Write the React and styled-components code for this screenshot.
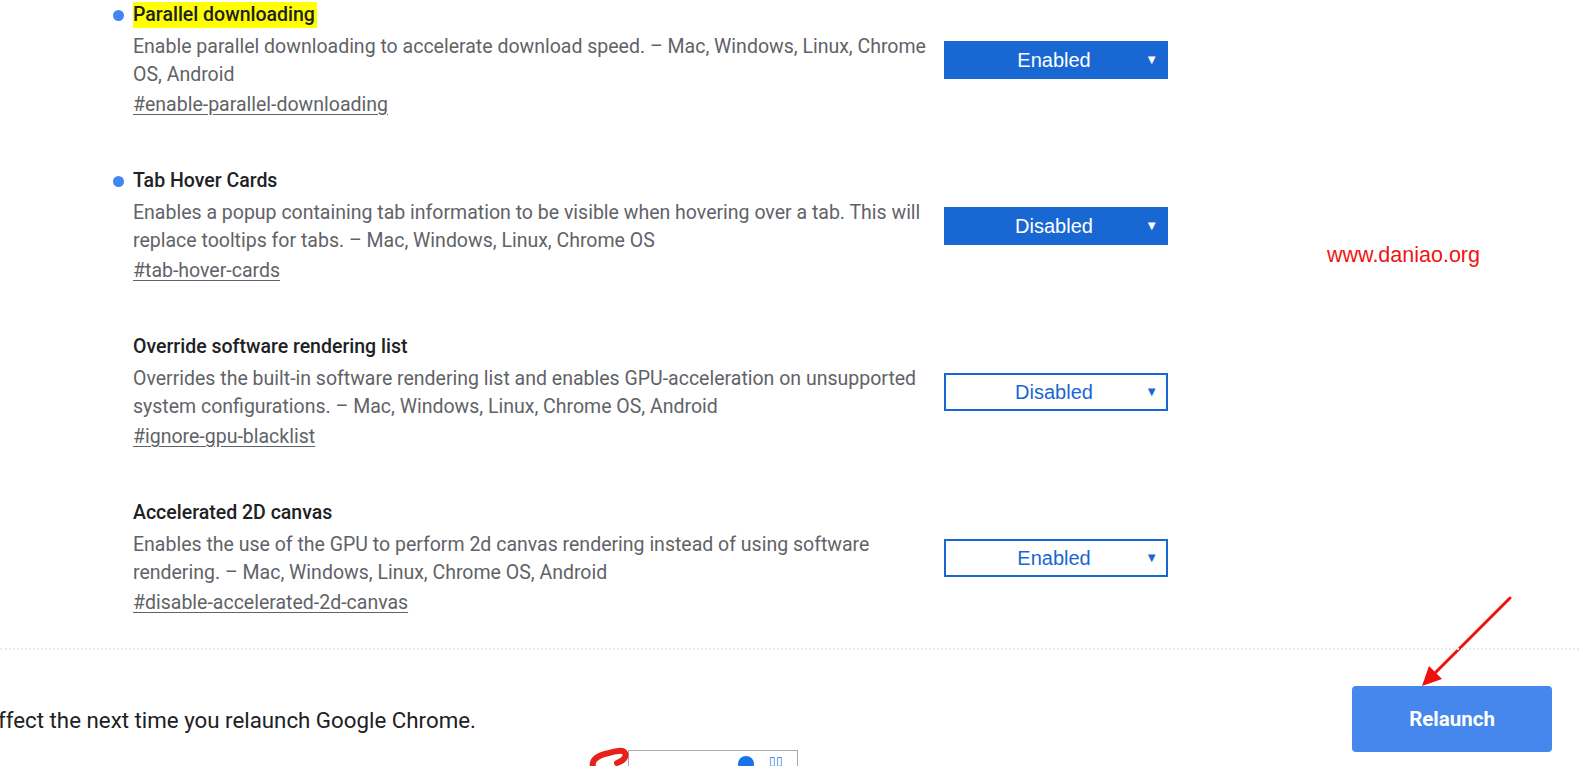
import React from 'react';
import styled, { createGlobalStyle } from 'styled-components';

const GlobalStyle = createGlobalStyle`
  html, body {
    margin: 0;
    padding: 0;
    background: #fff;
    font-family: Roboto, "Liberation Sans", Arial, sans-serif;
  }
  body {
    width: 1579px;
    height: 766px;
    overflow: hidden;
  }
`;

const experiments = [
  {
    title: 'Parallel downloading',
    highlight: true,
    modified: true,
    desc: 'Enable parallel downloading to accelerate download speed. – Mac, Windows, Linux, Chrome OS, Android',
    link: '#enable-parallel-downloading',
    value: 'Enabled',
    filled: true,
  },
  {
    title: 'Tab Hover Cards',
    modified: true,
    desc: 'Enables a popup containing tab information to be visible when hovering over a tab. This will replace tooltips for tabs. – Mac, Windows, Linux, Chrome OS',
    link: '#tab-hover-cards',
    value: 'Disabled',
    filled: true,
  },
  {
    title: 'Override software rendering list',
    desc: 'Overrides the built-in software rendering list and enables GPU-acceleration on unsupported system configurations. – Mac, Windows, Linux, Chrome OS, Android',
    link: '#ignore-gpu-blacklist',
    value: 'Disabled',
  },
  {
    title: 'Accelerated 2D canvas',
    desc: 'Enables the use of the GPU to perform 2d canvas rendering instead of using software rendering. – Mac, Windows, Linux, Chrome OS, Android',
    link: '#disable-accelerated-2d-canvas',
    value: 'Enabled',
  },
];

const App = () => {
  return (
    <Page>
      <GlobalStyle />
      <List>
        {experiments.map((e) => (
          <Experiment key={e.link}>
            <Info>
              <Title $modified={e.modified}>
                <TitleText $highlight={e.highlight}>{e.title}</TitleText>
              </Title>
              <Desc>{e.desc}</Desc>
              <Permalink>{e.link}</Permalink>
            </Info>
            <Select $filled={e.filled}>
              <span>{e.value}</span>
              <Caret>▼</Caret>
            </Select>
          </Experiment>
        ))}
      </List>

      <Watermark>www.daniao.org</Watermark>

      <Arrow width="120" height="110" viewBox="0 0 120 110">
        <line x1="108" y1="8" x2="28" y2="88" stroke="#f01010" strokeWidth="3" strokeLinecap="round" />
        <polygon points="20,96 27,76 40,89" fill="#f01010" />
      </Arrow>

      <Footer>
        <Notice>ffect the next time you relaunch Google Chrome.</Notice>
        <RelaunchButton>Relaunch</RelaunchButton>
        <Snippet>
          <Scribble width="44" height="22" viewBox="0 0 44 22">
            <path d="M6 20 C4 12 12 8 22 6 C30 4 36 2 38 6 C40 10 36 14 30 16" stroke="#e8201a" strokeWidth="6" fill="none" strokeLinecap="round" />
          </Scribble>
          <SnippetDot />
          <SnippetGlyph>▯▯</SnippetGlyph>
        </Snippet>
      </Footer>
    </Page>
  );
};

const Page = styled.div`
  position: relative;
  width: 1579px;
  height: 766px;
  overflow: hidden;
`;

const List = styled.div`
  display: flex;
  flex-direction: column;
  gap: 49px;
  padding: 2px 0 0 133px;
  height: 648px;
  box-sizing: border-box;
`;

const Experiment = styled.div`
  display: flex;
  align-items: flex-start;
`;

const Info = styled.div`
  width: 795px;
  margin-right: 16px;
`;

const Title = styled.div`
  position: relative;
  height: 26px;
  line-height: 26px;
  margin-bottom: 5px;
  &::before {
    content: '';
    display: ${(p) => (p.$modified ? 'block' : 'none')};
    position: absolute;
    left: -20px;
    top: 8px;
    width: 11px;
    height: 11px;
    border-radius: 50%;
    background: #4285f4;
  }
`;

const TitleText = styled.span`
  display: inline-block;
  font-size: 19.5px;
  font-weight: 500;
  color: #202124;
  background: ${(p) => (p.$highlight ? '#ffff00' : 'transparent')};
  padding-right: ${(p) => (p.$highlight ? '2px' : '0')};
`;

const Desc = styled.div`
  font-size: 19.5px;
  line-height: 28px;
  color: #5f6368;
`;

const Permalink = styled.div`
  margin-top: 2px;
  font-size: 19.5px;
  line-height: 28px;
  color: #5f6368;
  text-decoration: underline;
  text-underline-offset: 3px;
`;

const Select = styled.div`
  position: relative;
  margin-top: 39px;
  width: 224px;
  height: 38px;
  box-sizing: border-box;
  display: flex;
  align-items: center;
  justify-content: center;
  font-family: "Liberation Sans", Arial, sans-serif;
  font-size: 20px;
  background: ${(p) => (p.$filled ? '#1967d2' : '#fff')};
  color: ${(p) => (p.$filled ? '#fff' : '#1967d2')};
  border: 2px solid #1967d2;
  span {
    margin-left: -4px;
  }
`;

const Caret = styled.i`
  position: absolute;
  right: 8px;
  top: 9px;
  font-style: normal;
  font-size: 13px;
`;

const Watermark = styled.div`
  position: absolute;
  left: 1327px;
  top: 243px;
  font-family: "Liberation Sans", Arial, sans-serif;
  font-size: 21.5px;
  color: #f01414;
`;

const Arrow = styled.svg`
  position: absolute;
  left: 1402px;
  top: 590px;
`;

const Footer = styled.div`
  position: relative;
  height: 118px;
  border-top: 2px dotted #e6ece0;
  display: flex;
  align-items: flex-start;
  justify-content: space-between;
  padding: 36px 27px 0 0;
  box-sizing: border-box;
`;

const Notice = styled.div`
  margin: 20px 0 0 -2px;
  font-size: 22.3px;
  line-height: 28px;
  color: #202124;
`;

const RelaunchButton = styled.button`
  width: 200px;
  height: 66px;
  border: none;
  border-radius: 4px;
  background: #4587ec;
  color: #fff;
  font-family: Roboto, sans-serif;
  font-size: 20.5px;
  font-weight: 700;
`;

const Snippet = styled.div`
  position: absolute;
  left: 628px;
  top: 100px;
  width: 168px;
  height: 30px;
  border: 1px solid #aaa;
  background: #fff;
`;

const Scribble = styled.svg`
  position: absolute;
  left: -42px;
  top: -4px;
`;

const SnippetDot = styled.div`
  position: absolute;
  left: 109px;
  top: 5px;
  width: 16px;
  height: 16px;
  border-radius: 50%;
  background: #1a73e8;
`;

const SnippetGlyph = styled.div`
  position: absolute;
  left: 140px;
  top: 3px;
  font-size: 12px;
  color: #1a73e8;
`;

export default App;
